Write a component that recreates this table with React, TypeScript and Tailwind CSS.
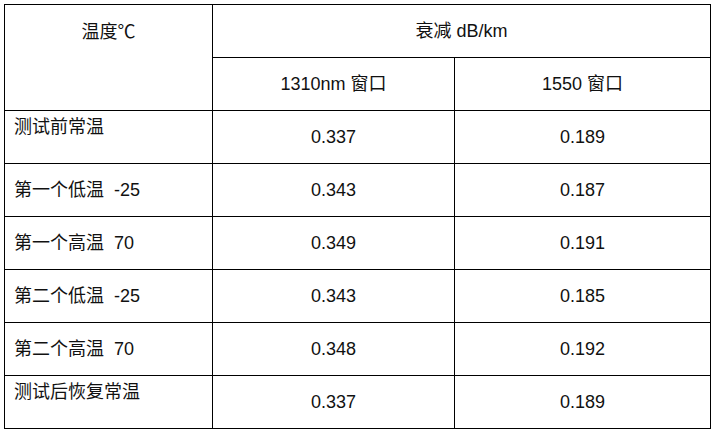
import React from "react";

interface Row {
  label: string;
  a: string;
  b: string;
  top?: boolean;
}

const rows: Row[] = [
  { label: "测试前常温", a: "0.337", b: "0.189", top: true },
  { label: "第一个低温  -25", a: "0.343", b: "0.187" },
  { label: "第一个高温  70", a: "0.349", b: "0.191" },
  { label: "第二个低温  -25", a: "0.343", b: "0.185" },
  { label: "第二个高温  70", a: "0.348", b: "0.192" },
  { label: "测试后恢复常温", a: "0.337", b: "0.189", top: true },
];

export default function App() {
  return (
    <div className="w-[719px] h-[435px] bg-white pl-[4px] pt-[4px] font-['Liberation_Sans','Noto_Sans_CJK_SC',sans-serif] text-[18px] text-[#111]">
      <table className="border-collapse table-fixed w-[706px]">
        <colgroup>
          <col className="w-[208px]" />
          <col className="w-[242px]" />
          <col className="w-[256px]" />
        </colgroup>
        <tbody>
          <tr className="h-[53px]">
            <td rowSpan={2} className="border border-black align-top text-center pt-[14px] h-[106px]">
              温度℃
            </td>
            <td colSpan={2} className="border border-black text-center">
              衰减 dB/km
            </td>
          </tr>
          <tr className="h-[53px]">
            <td className="border border-black text-center">1310nm 窗口</td>
            <td className="border border-black text-center">1550 窗口</td>
          </tr>
          {rows.map((r, i) => (
            <tr key={i} className="h-[53px]">
              <td
                className={`border border-black pl-[9px] whitespace-pre ${
                  r.top ? "align-top pt-[3px]" : "align-middle"
                }`}
              >
                {r.label}
              </td>
              <td className="border border-black text-center">{r.a}</td>
              <td className="border border-black text-center">{r.b}</td>
            </tr>
          ))}
        </tbody>
      </table>
    </div>
  );
}
